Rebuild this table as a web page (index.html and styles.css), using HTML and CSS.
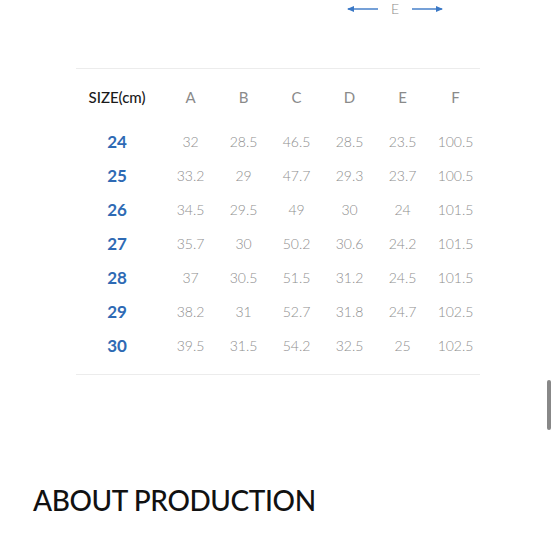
FILE: index.html
```html
<!DOCTYPE html>
<html>
<head>
<meta charset="utf-8">
<link rel="stylesheet" href="styles.css">
</head>
<body>
<div class="page">
  <div class="dim">
    <svg class="arrow" width="32" height="8" viewBox="0 0 32 8"><path d="M1 4H31" stroke="#3a78c6" stroke-width="1.4"/><path d="M0 4L7 1V7Z" fill="#3a78c6"/></svg>
    <span class="dim-label">E</span>
    <svg class="arrow" width="32" height="8" viewBox="0 0 32 8"><path d="M1 4H31" stroke="#3a78c6" stroke-width="1.4"/><path d="M32 4L25 1V7Z" fill="#3a78c6"/></svg>
  </div>
  <div class="table">
    <div class="row head">
      <div class="c first">SIZE(cm)</div>
      <div class="c">A</div><div class="c">B</div><div class="c">C</div><div class="c">D</div><div class="c">E</div><div class="c">F</div>
    </div>
    <div class="row"><div class="c first">24</div><div class="c">32</div><div class="c">28.5</div><div class="c">46.5</div><div class="c">28.5</div><div class="c">23.5</div><div class="c">100.5</div></div>
    <div class="row"><div class="c first">25</div><div class="c">33.2</div><div class="c">29</div><div class="c">47.7</div><div class="c">29.3</div><div class="c">23.7</div><div class="c">100.5</div></div>
    <div class="row"><div class="c first">26</div><div class="c">34.5</div><div class="c">29.5</div><div class="c">49</div><div class="c">30</div><div class="c">24</div><div class="c">101.5</div></div>
    <div class="row"><div class="c first">27</div><div class="c">35.7</div><div class="c">30</div><div class="c">50.2</div><div class="c">30.6</div><div class="c">24.2</div><div class="c">101.5</div></div>
    <div class="row"><div class="c first">28</div><div class="c">37</div><div class="c">30.5</div><div class="c">51.5</div><div class="c">31.2</div><div class="c">24.5</div><div class="c">101.5</div></div>
    <div class="row"><div class="c first">29</div><div class="c">38.2</div><div class="c">31</div><div class="c">52.7</div><div class="c">31.8</div><div class="c">24.7</div><div class="c">102.5</div></div>
    <div class="row"><div class="c first">30</div><div class="c">39.5</div><div class="c">31.5</div><div class="c">54.2</div><div class="c">32.5</div><div class="c">25</div><div class="c">102.5</div></div>
  </div>
  <h2 class="section-title">ABOUT PRODUCTION</h2>
  <div class="scrollbar"></div>
</div>
</body>
</html>
```

FILE: styles.css
```css
html, body {
  margin: 0;
  padding: 0;
  background: #fff;
  overflow: hidden;
}
.page {
  position: relative;
  width: 555px;
  height: 555px;
  font-family: Lato, "Liberation Sans", sans-serif;
}
.dim {
  display: flex;
  align-items: center;
  padding-left: 347px;
  padding-top: 3px;
  height: 12px;
  gap: 12px;
}
.arrow { display: block; }
.dim-label {
  color: #8a8a8a;
  font-size: 14px;
  font-weight: 300;
  line-height: 12px;
}
.table {
  margin: 53px 0 0 76px;
  width: 404px;
  border-top: 1px solid #ececec;
  border-bottom: 1px solid #ececec;
  padding-bottom: 12px;
}
.row {
  display: grid;
  grid-template-columns: 88px repeat(6, 53px);
  height: 34px;
  align-items: center;
}
.row.head { height: 55px; }
.c {
  text-align: center;
  font-size: 14px;
  font-weight: 300;
  color: #8e8e8e;
}
.row .first {
  padding-right: 6px;
  color: #2e6ab4;
  font-weight: 700;
  font-size: 17px;
}
.head .c { font-size: 15px; color: #8a8a8a; font-weight: 400; }
.head .first {
  color: #1a1a1a;
  font-size: 15px;
  font-weight: 500;
}
.section-title {
  margin: 108px 0 0 33px;
  font-size: 28px;
  font-weight: 500;
  color: #111;
  letter-spacing: -0.4px;
  line-height: 34px;
}
.scrollbar {
  position: absolute;
  left: 547px;
  top: 380px;
  width: 4px;
  height: 50px;
  border-radius: 2px;
  background: #888;
}
```
